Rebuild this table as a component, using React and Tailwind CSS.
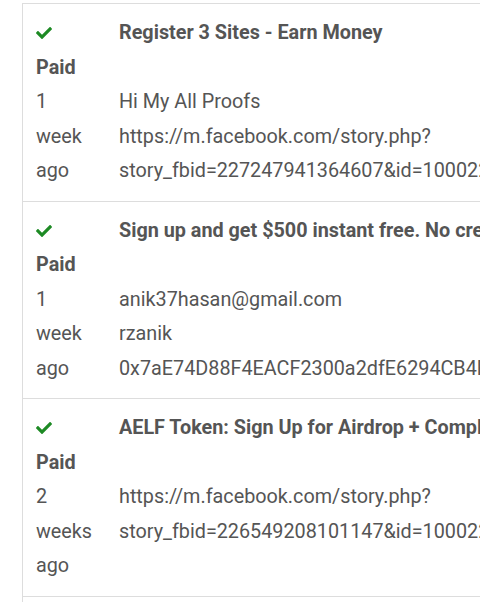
import React from "react";
import { FaCheck } from "react-icons/fa";

const rows = [
  {
    time: ["1", "week", "ago"],
    title: "Register 3 Sites - Earn Money",
    lines: [
      "Hi My All Proofs",
      "https://m.facebook.com/story.php?",
      "story_fbid=227247941364607&id=100022817360413",
    ],
  },
  {
    time: ["1", "week", "ago"],
    title: "Sign up and get $500 instant free. No credit card required",
    lines: [
      "anik37hasan@gmail.com",
      "rzanik",
      "0x7aE74D88F4EACF2300a2dfE6294CB4F1A9B27c55",
    ],
  },
  {
    time: ["2", "weeks", "ago"],
    title: "AELF Token: Sign Up for Airdrop + Complete Tasks",
    lines: [
      "https://m.facebook.com/story.php?",
      "story_fbid=226549208101147&id=100022817360413",
    ],
  },
];

export default function App() {
  return (
    <div
      className="w-[480px] h-[602px] overflow-hidden bg-white text-[#555] text-[19.8px] leading-[34.5px] flex flex-col"
      style={{ fontFamily: "Roboto, 'Liberation Sans', sans-serif" }}
    >
      <div className="ml-[22px] mt-[3px] w-[900px] grow border-l border-t border-[#dddddd]">
        {rows.map((r, i) => (
          <div key={i} className="flex border-b border-[#dddddd] py-[12px]">
            <div className="w-[96px] shrink-0 pl-[13px]">
              <div className="h-[34.5px] flex items-center">
                <FaCheck className="text-[#1d8a24] w-[16px] h-[16px]" />
              </div>
              <div className="font-bold">Paid</div>
              {r.time.map((t, j) => (
                <div key={j}>{t}</div>
              ))}
            </div>
            <div className="whitespace-nowrap">
              <div className="font-bold">{r.title}</div>
              <div className="h-[34.5px]"></div>
              {r.lines.map((l, j) => (
                <div key={j}>{l}</div>
              ))}
            </div>
          </div>
        ))}
      </div>
    </div>
  );
}
